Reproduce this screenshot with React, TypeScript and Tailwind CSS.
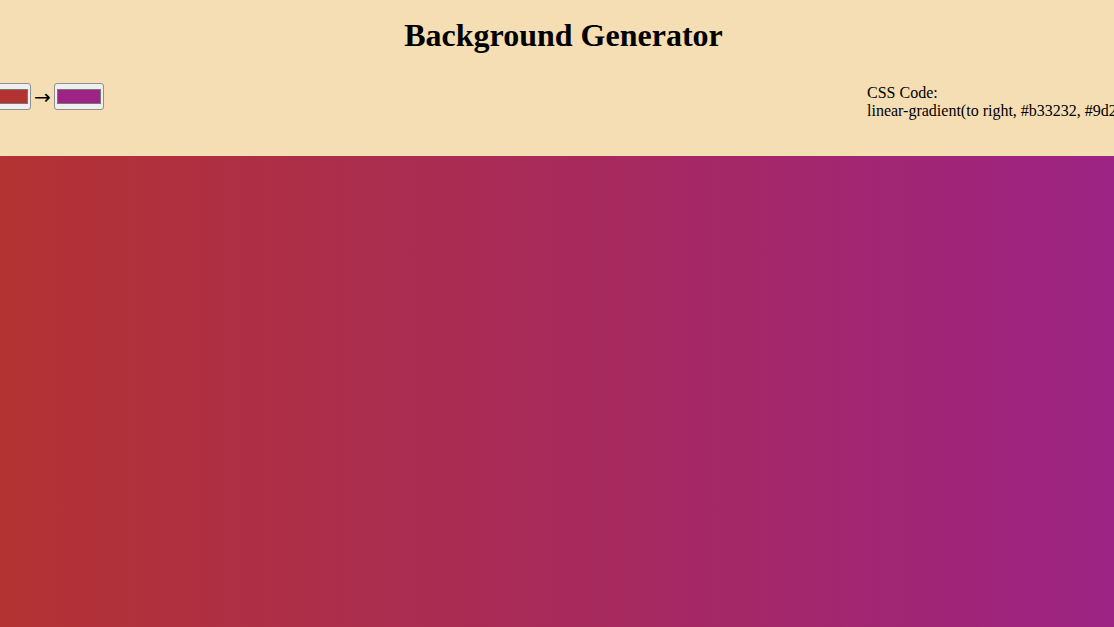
import React, { useState } from 'react';

const App: React.FC = () => {
  const [color1, setColor1] = useState('#b33232');
  const [color2, setColor2] = useState('#9d2384');
  const gradient = `linear-gradient(to right, ${color1}, ${color2})`;

  return (
    <div className="h-[627px] w-full overflow-hidden flex flex-col font-['Liberation_Serif',serif] text-black">
      {/* Header */}
      <header className="h-[156px] shrink-0 bg-[#f5deb3]">
        <h1 className="pt-[17px] pl-[13px] text-center text-[32px] font-bold leading-[37px]">Background Generator</h1>
        <div className="mt-[29px] flex items-start whitespace-nowrap">
          <div className="ml-[-19px] flex items-center gap-[3px]">
            <input
              type="color"
              value={color1}
              onChange={(e) => setColor1(e.target.value)}
              className="w-[50px] h-[27px] px-0 py-[1px] border border-[#8f8f8f] rounded-[3px] bg-[#efefef]"
            />
            <span className="font-['DejaVu_Sans',sans-serif] text-[20px] leading-none">→</span>
            <input
              type="color"
              value={color2}
              onChange={(e) => setColor2(e.target.value)}
              className="w-[50px] h-[27px] px-0 py-[1px] border border-[#8f8f8f] rounded-[3px] bg-[#efefef]"
            />
          </div>
          <div className="ml-auto w-[247px] pt-[1px] text-[16px] leading-[18px]">
            <p>CSS Code:</p>
            <p>{gradient}</p>
          </div>
        </div>
      </header>

      {/* Preview */}
      <main className="flex-1" style={{ backgroundImage: gradient }} />
    </div>
  );
};

export default App;
